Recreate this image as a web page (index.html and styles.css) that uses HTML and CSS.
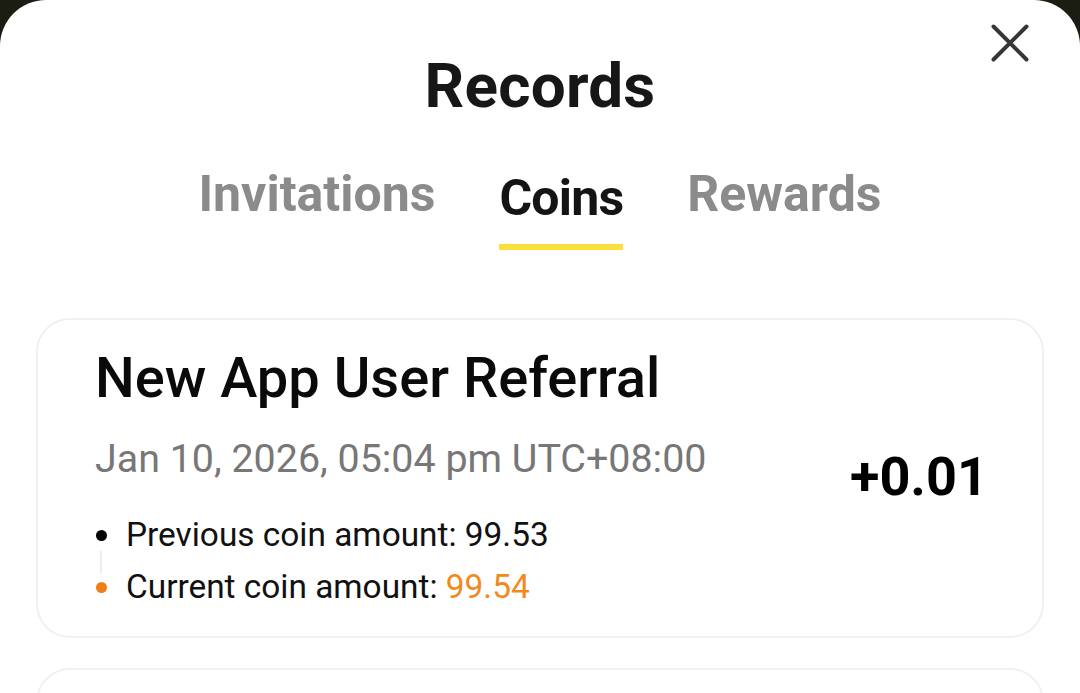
FILE: index.html
```html
<!DOCTYPE html>
<html lang="en">

  <head>
    <meta charset="UTF-8">
    <meta name="viewport" content="width=device-width, initial-scale=1.0">
    <title>Records</title>
    <link rel="stylesheet" href="styles.css">
  </head>

  <body>
    <div class="sheet">
      <div class="sheet-header">
        <h1>Records</h1>
        <button class="close-btn" aria-label="Close">
          <svg width="40" height="40" viewBox="0 0 40 40">
            <path d="M3.5 3.5 L36.5 36.5 M36.5 3.5 L3.5 36.5" stroke="#363636" stroke-width="4" stroke-linecap="round" fill="none" />
          </svg>
        </button>
      </div>

      <div class="tabs">
        <div class="tab">Invitations</div>
        <div class="tab active">Coins</div>
        <div class="tab">Rewards</div>
      </div>

      <div class="record-list">
        <div class="record-card">
          <div class="record-info">
            <h2 class="record-title">New App User Referral</h2>
            <div class="record-date">Jan 10, 2026, 05:04 pm UTC+08:00</div>
            <ul class="record-steps">
              <li class="step prev">Previous coin amount: 99.53</li>
              <li class="step curr">Current coin amount: <span class="amount">99.54</span></li>
            </ul>
          </div>
          <div class="record-delta">+0.01</div>
        </div>
        <div class="record-card"></div>
      </div>
    </div>
  </body>

</html>
```

FILE: styles.css
```css
html {
  font-family: Roboto, "Noto Sans", sans-serif;
}

body {
  margin: 0;
  background-color: #1b1d13;
  overflow: hidden;
  height: 693px;
}

.sheet {
  background-color: #fff;
  border-radius: 46px 46px 0 0;
  min-height: 693px;
  padding: 0 36px;
}

.sheet-header {
  position: relative;
  padding-top: 46px;
  text-align: center;
}

.sheet-header h1 {
  margin: 0;
  font-size: 62px;
  line-height: 80px;
  font-weight: 700;
  color: #171717;
  letter-spacing: 0.2px;
}

.close-btn {
  position: absolute;
  top: 23px;
  right: 14px;
  width: 40px;
  height: 40px;
  padding: 0;
  border: none;
  background: none;
}

.tabs {
  display: flex;
  justify-content: center;
  align-items: flex-start;
  gap: 64px;
  margin-top: 38px;
  height: 154px;
}

.tab {
  position: relative;
  font-size: 50px;
  font-weight: 700;
  line-height: 60px;
  color: #8b8b8b;
}

.tab.active {
  color: #141414;
  padding-top: 4px;
  letter-spacing: -0.8px;
}

.tab.active::after {
  content: "";
  position: absolute;
  left: 0;
  right: 0;
  top: 80px;
  height: 6px;
  background-color: #fbe03b;
}

.record-list {
  display: flex;
  flex-direction: column;
  gap: 30px;
}

.record-card {
  border: 2px solid #f0f0f0;
  border-radius: 34px;
  min-height: 320px;
  padding: 22px 54px 0 57px;
  display: flex;
  justify-content: space-between;
  align-items: flex-start;
  box-sizing: border-box;
}

.record-title {
  margin: 0;
  font-size: 56px;
  font-weight: 500;
  color: #0a0a0a;
  line-height: 72px;
}

.record-date {
  font-size: 39.4px;
  color: #777;
  margin-top: 20px;
  line-height: 50px;
}

.record-steps {
  list-style: none;
  margin: 25px 0 0 0;
  padding: 0;
}

.step {
  position: relative;
  padding-left: 31px;
  font-size: 33.4px;
  color: #111;
  line-height: 52px;
}

.step::before {
  content: "";
  position: absolute;
  left: 1px;
  top: 21px;
  width: 11px;
  height: 11px;
  border-radius: 50%;
  background-color: #000;
}

.step.prev::after {
  content: "";
  position: absolute;
  left: 5px;
  top: 42px;
  width: 2px;
  height: 22px;
  background-color: #ededed;
}

.step.curr::before {
  background-color: #f07f17;
}

.amount {
  color: #f08a1c;
}

.record-delta {
  font-size: 54px;
  font-weight: 700;
  line-height: 64px;
  color: #000;
  margin-top: 103px;
}
```
